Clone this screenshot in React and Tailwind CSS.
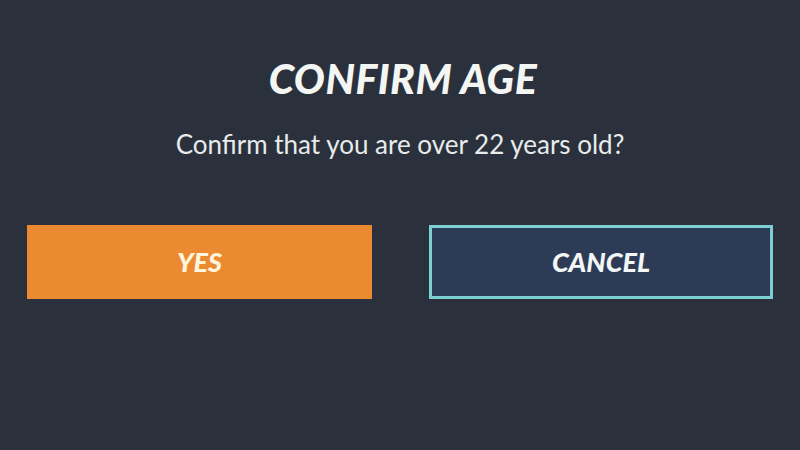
export default function App() {
  return (
    <div className="w-[800px] h-[450px] bg-[#2a313c] flex flex-col items-center" style={{ fontFamily: "Lato, 'Open Sans', sans-serif" }}>
      <h1 className="mt-[53px] text-[41px] leading-[52px] font-black italic text-[#f4f6f4] tracking-[0.5px] pl-[6px]">CONFIRM AGE</h1>
      <p className="mt-[23px] text-[26px] leading-[32px] text-[#e8ebec]">Confirm that you are over 22 years old?</p>
      <div className="mt-[65px] w-full px-[27px] flex justify-between">
        <button className="w-[345px] h-[74px] bg-[#ec8a32] text-[#fff5dc] text-[27px] font-black italic">YES</button>
        <button className="w-[344px] h-[74px] bg-[#2e3b56] border-[3px] border-[#7ecfd3] text-[#f2f6f6] text-[27px] font-black italic">CANCEL</button>
      </div>
    </div>
  );
}
